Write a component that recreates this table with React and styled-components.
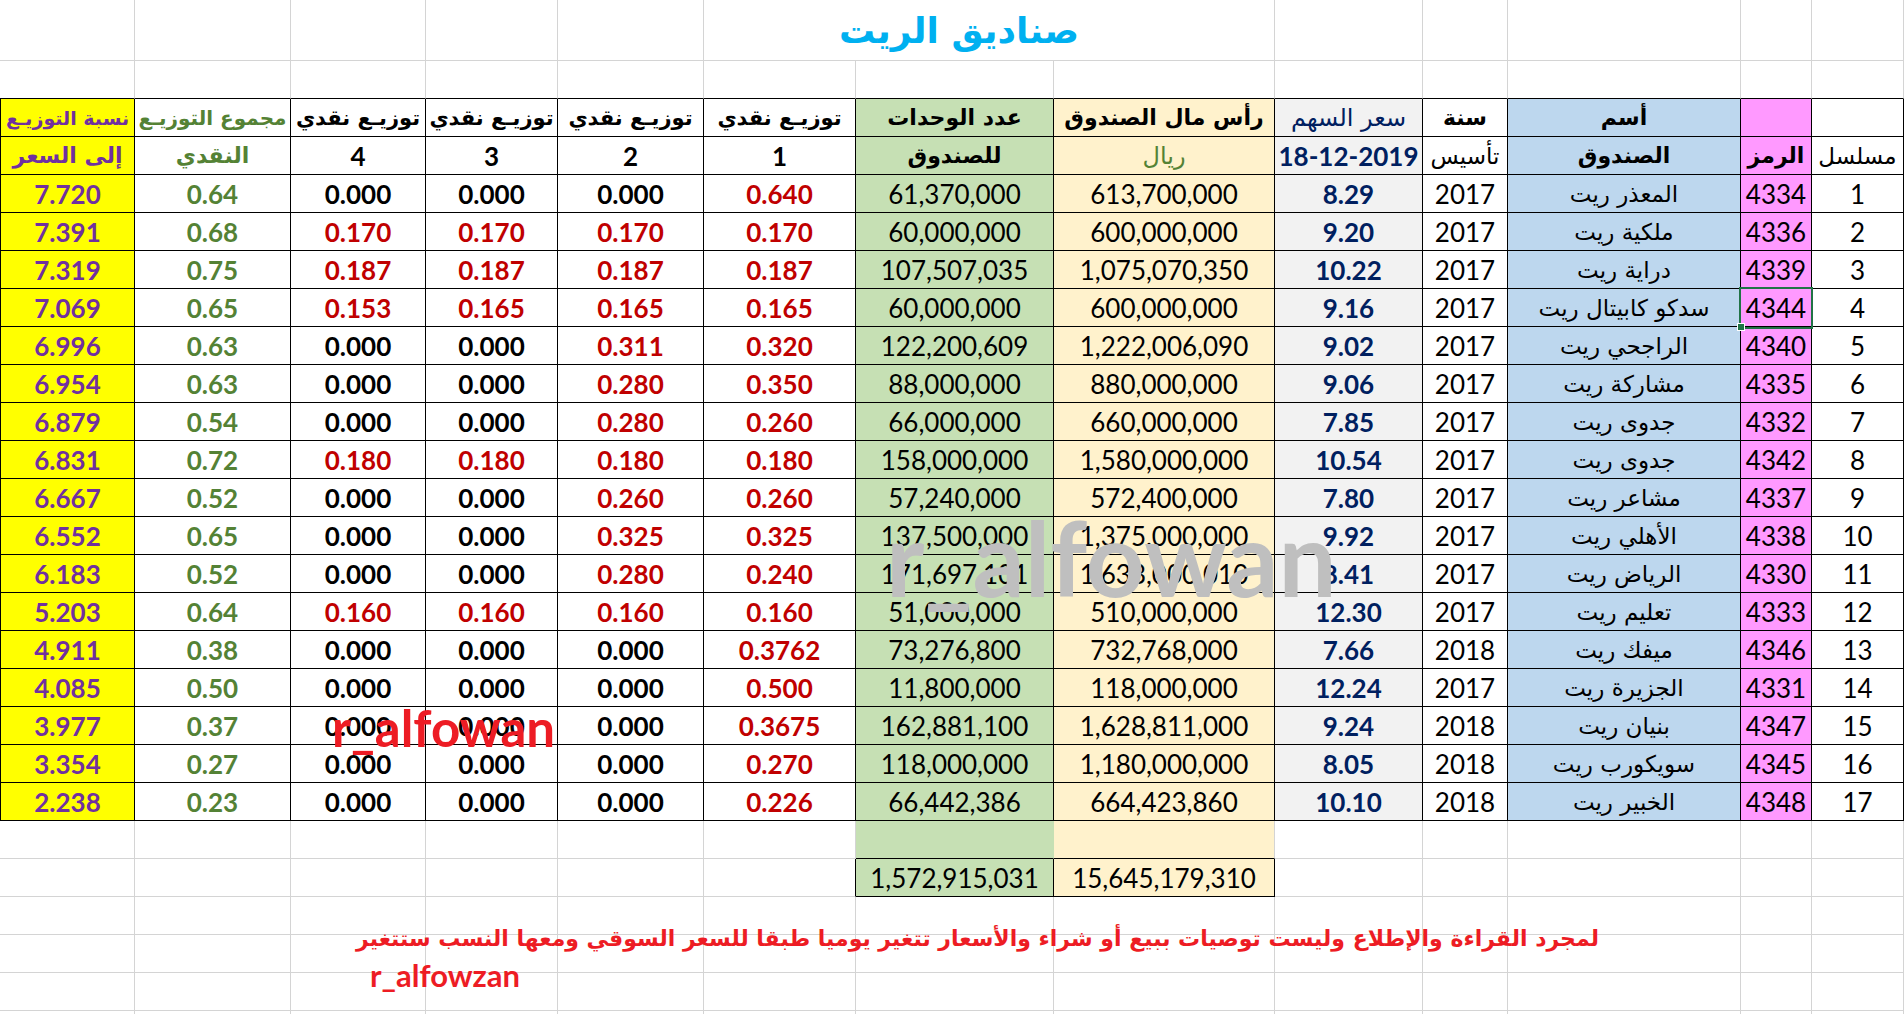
import React from 'react';
import styled, { createGlobalStyle, css } from 'styled-components';

const GlobalStyle = createGlobalStyle`
  html, body {
    margin: 0;
    padding: 0;
    background: #fff;
    overflow: hidden;
  }
  body {
    font-family: Lato, "DejaVu Sans", sans-serif;
  }
`;

// column widths, left to right (sheet is RTL, serial column sits at the right)
const COLS = [135, 156, 135, 132, 146, 152, 198, 221, 148, 85, 233, 71, 92];

const GRID = '#d4d4d4';
const LINE = '#000';
const YELLOW = '#ffff00';
const PURPLE = '#7030a0';
const OLIVE = '#548235';
const RED = '#c00000';
const NAVY = '#002060';
const GREEN_BG = '#c6e0b4';
const CREAM_BG = '#fff2cc';
const GREY_BG = '#f2f2f2';
const BLUE_BG = '#bdd7ee';
const PINK_BG = '#ff99ff';

const COL_BG = [YELLOW, null, null, null, null, null, GREEN_BG, CREAM_BG, GREY_BG, null, BLUE_BG, PINK_BG, null];

const Sheet = styled.div`
  position: relative;
  display: grid;
  grid-template-columns: ${COLS.map((w) => `${w}px`).join(' ')};
  grid-template-rows: 61px;
  grid-auto-rows: 38px;
  width: 1904px;
  height: 1014px;
  overflow: hidden;
  font-family: Lato, "DejaVu Sans", sans-serif;
`;

const Cell = styled.div`
  box-sizing: border-box;
  display: flex;
  align-items: center;
  justify-content: center;
  white-space: nowrap;
  overflow: hidden;
  background: ${(p) => p.$bg || '#fff'};
  color: ${(p) => p.$color || '#000'};
  font-weight: ${(p) => (p.$bold ? 700 : 400)};
  font-size: ${(p) => p.$size || 26}px;
  border-right: 1px solid ${(p) => p.$right || (p.$edge ? LINE : GRID)};
  border-bottom: 1px solid ${(p) => p.$bottom || (p.$edge ? LINE : GRID)};
  ${(p) => p.$first && p.$edge && css`border-left: 1px solid ${LINE};`}
`;

const ArabicCell = styled(Cell)`
  font-family: "DejaVu Sans", sans-serif;
  font-size: ${(p) => p.$size || 23}px;
`;

const TitleCell = styled(Cell)`
  grid-column: 6 / 9;
  font-family: "DejaVu Sans", sans-serif;
  font-size: 36px;
  font-weight: 700;
  color: #00b0f0;
  padding-right: 60px;
`;

const SelectedCell = styled(Cell)`
  position: relative;
  overflow: visible;
  &::after {
    content: '';
    position: absolute;
    left: -2px;
    top: -2px;
    right: -2px;
    bottom: -3px;
    border: 2px solid #217346;
    z-index: 2;
  }
  &::before {
    content: '';
    position: absolute;
    left: -4px;
    bottom: -5px;
    width: 6px;
    height: 6px;
    background: #217346;
    border: 1px solid #fff;
    z-index: 3;
  }
`;

const GreyMark = styled.div`
  position: absolute;
  left: 886px;
  top: 506px;
  font-family: Lato, sans-serif;
  font-weight: 700;
  font-size: 103px;
  line-height: 1;
  color: #bfbfbf;
  z-index: 4;
  pointer-events: none;
`;

const RedMark = styled.div`
  position: absolute;
  left: 332px;
  top: 702px;
  font-family: Lato, sans-serif;
  font-weight: 700;
  font-size: 51px;
  line-height: 1;
  color: #ed1c24;
  z-index: 4;
  pointer-events: none;
`;

const Note = styled.div`
  position: absolute;
  left: 370px;
  top: 920px;
  width: 1229px;
  display: flex;
  flex-direction: column;
  color: #ed1c24;
  z-index: 4;
`;

const NoteLine = styled.div`
  height: 37px;
  line-height: 37px;
  white-space: nowrap;
  text-align: ${(p) => p.$align};
  direction: ${(p) => p.$dir};
  font-family: ${(p) => (p.$latin ? 'Lato, sans-serif' : '"DejaVu Sans", sans-serif')};
  font-weight: 700;
  font-size: ${(p) => p.$size}px;
`;

const HEAD1 = [
  { t: 'نسبة التوزيـع', color: PURPLE, bold: true, size: 19 },
  { t: 'مجموع التوزيـع', color: OLIVE, bold: true, size: 20 },
  { t: 'توزيـع نقدي', bold: true, size: 21 },
  { t: 'توزيـع نقدي', bold: true, size: 21 },
  { t: 'توزيـع نقدي', bold: true, size: 21 },
  { t: 'توزيـع نقدي', bold: true, size: 21 },
  { t: 'عدد الوحدات', bold: true, size: 22 },
  { t: 'رأس مال الصندوق', bold: true, size: 22 },
  { t: 'سعر السهم', color: NAVY, size: 24 },
  { t: 'سنة', bold: true, size: 22 },
  { t: 'أسم', bold: true, size: 22 },
  { t: '' },
  { t: '' },
];

const HEAD2 = [
  { t: 'إلى السعر', color: PURPLE, bold: true, size: 22 },
  { t: 'النقدي', color: OLIVE, bold: true, size: 22 },
  { t: '4', bold: true, num: true },
  { t: '3', bold: true, num: true },
  { t: '2', bold: true, num: true },
  { t: '1', bold: true, num: true },
  { t: 'للصندوق', bold: true, size: 22 },
  { t: 'ريال', color: OLIVE, size: 24 },
  { t: '18-12-2019', color: NAVY, bold: true, num: true },
  { t: 'تأسيس', size: 23 },
  { t: 'الصندوق', bold: true, size: 22 },
  { t: 'الرمز', bold: true, size: 22 },
  { t: 'مسلسل', size: 23 },
];

const ROWS = [
  ['7.720', '0.64', '0.000', '0.000', '0.000', '0.640', '61,370,000', '613,700,000', '8.29', '2017', 'المعذر ريت', '4334', '1'],
  ['7.391', '0.68', '0.170', '0.170', '0.170', '0.170', '60,000,000', '600,000,000', '9.20', '2017', 'ملكية ريت', '4336', '2'],
  ['7.319', '0.75', '0.187', '0.187', '0.187', '0.187', '107,507,035', '1,075,070,350', '10.22', '2017', 'دراية ريت', '4339', '3'],
  ['7.069', '0.65', '0.153', '0.165', '0.165', '0.165', '60,000,000', '600,000,000', '9.16', '2017', 'سدكو كابيتال ريت', '4344', '4'],
  ['6.996', '0.63', '0.000', '0.000', '0.311', '0.320', '122,200,609', '1,222,006,090', '9.02', '2017', 'الراجحي ريت', '4340', '5'],
  ['6.954', '0.63', '0.000', '0.000', '0.280', '0.350', '88,000,000', '880,000,000', '9.06', '2017', 'مشاركة ريت', '4335', '6'],
  ['6.879', '0.54', '0.000', '0.000', '0.280', '0.260', '66,000,000', '660,000,000', '7.85', '2017', 'جدوى ريت', '4332', '7'],
  ['6.831', '0.72', '0.180', '0.180', '0.180', '0.180', '158,000,000', '1,580,000,000', '10.54', '2017', 'جدوى ريت', '4342', '8'],
  ['6.667', '0.52', '0.000', '0.000', '0.260', '0.260', '57,240,000', '572,400,000', '7.80', '2017', 'مشاعر ريت', '4337', '9'],
  ['6.552', '0.65', '0.000', '0.000', '0.325', '0.325', '137,500,000', '1,375,000,000', '9.92', '2017', 'الأهلي ريت', '4338', '10'],
  ['6.183', '0.52', '0.000', '0.000', '0.280', '0.240', '171,697,101', '1,633,000,010', '8.41', '2017', 'الرياض ريت', '4330', '11'],
  ['5.203', '0.64', '0.160', '0.160', '0.160', '0.160', '51,000,000', '510,000,000', '12.30', '2017', 'تعليم ريت', '4333', '12'],
  ['4.911', '0.38', '0.000', '0.000', '0.000', '0.3762', '73,276,800', '732,768,000', '7.66', '2018', 'ميفك ريت', '4346', '13'],
  ['4.085', '0.50', '0.000', '0.000', '0.000', '0.500', '11,800,000', '118,000,000', '12.24', '2017', 'الجزيرة ريت', '4331', '14'],
  ['3.977', '0.37', '0.000', '0.000', '0.000', '0.3675', '162,881,100', '1,628,811,000', '9.24', '2018', 'بنيان ريت', '4347', '15'],
  ['3.354', '0.27', '0.000', '0.000', '0.000', '0.270', '118,000,000', '1,180,000,000', '8.05', '2018', 'سويكورب ريت', '4345', '16'],
  ['2.238', '0.23', '0.000', '0.000', '0.000', '0.226', '66,442,386', '664,423,860', '10.10', '2018', 'الخبير ريت', '4348', '17'],
];

const dataStyle = (col, v) => {
  if (col === 0) return { color: PURPLE, bold: true };
  if (col === 1) return { color: OLIVE, bold: true };
  if (col >= 2 && col <= 4) return { color: v === '0.000' ? '#000' : RED, bold: true };
  if (col === 5) return { color: RED, bold: true };
  if (col === 8) return { color: NAVY, bold: true };
  return {};
};

const BlankRow = ({ id, bottom }) =>
  COLS.map((_, c) => <Cell key={`${id}-${c}`} $bottom={bottom} />);

const HeadRow = ({ id, cells }) =>
  cells.map((h, c) => {
    const Comp = h.num ? Cell : ArabicCell;
    return (
      <Comp
        key={`${id}-${c}`}
        $edge
        $first={c === 0}
        $bg={COL_BG[c]}
        $color={h.color}
        $bold={h.bold}
        $size={h.size}
      >
        {h.t}
      </Comp>
    );
  });

const DataRow = ({ row, r }) =>
  row.map((v, c) => {
    const s = dataStyle(c, v);
    const Comp = c === 10 ? ArabicCell : r === 3 && c === 11 ? SelectedCell : Cell;
    return (
      <Comp key={`d${r}-${c}`} $edge $first={c === 0} $bg={COL_BG[c]} $color={s.color} $bold={s.bold}>
        {v}
      </Comp>
    );
  });

const App = () => (
  <>
    <GlobalStyle />
    <Sheet>
      {/* title row */}
      {[0, 1, 2, 3, 4].map((c) => <Cell key={`t${c}`} />)}
      <TitleCell>صناديق الريت</TitleCell>
      {[8, 9, 10, 11, 12].map((c) => <Cell key={`t${c}`} />)}

      <BlankRow id="b1" bottom={LINE} />
      <HeadRow id="h1" cells={HEAD1} />
      <HeadRow id="h2" cells={HEAD2} />
      {ROWS.map((row, r) => <DataRow key={r} row={row} r={r} />)}

      {/* coloured spacer under the units / capital columns */}
      {COLS.map((_, c) => {
        if (c === 6) return <Cell key="f6" $bg={GREEN_BG} $right={GREEN_BG} $bottom={LINE} />;
        if (c === 7) return <Cell key="f7" $bg={CREAM_BG} $bottom={LINE} />;
        return <Cell key={`f${c}`} />;
      })}

      {/* totals */}
      {COLS.map((_, c) => {
        if (c === 5) return <Cell key="s5" $right={LINE} />;
        if (c === 6) return <Cell key="s6" $edge $bg={GREEN_BG}>1,572,915,031</Cell>;
        if (c === 7) return <Cell key="s7" $edge $bg={CREAM_BG}>15,645,179,310</Cell>;
        return <Cell key={`s${c}`} />;
      })}

      <BlankRow id="b2" />
      <BlankRow id="b3" />
      <BlankRow id="b4" />
      <BlankRow id="b5" />

      <GreyMark>r_alfowan</GreyMark>
      <RedMark>r_alfowan</RedMark>
      <Note>
        <NoteLine $align="right" $dir="rtl" $size={22}>
          لمجرد القراءة والإطلاع وليست توصيات ببيع أو شراء والأسعار تتغير يوميا طبقا للسعر السوقي ومعها النسب ستتغير
        </NoteLine>
        <NoteLine $align="left" $dir="ltr" $size={31} $latin>
          r_alfowzan
        </NoteLine>
      </Note>
    </Sheet>
  </>
);

export default App;
